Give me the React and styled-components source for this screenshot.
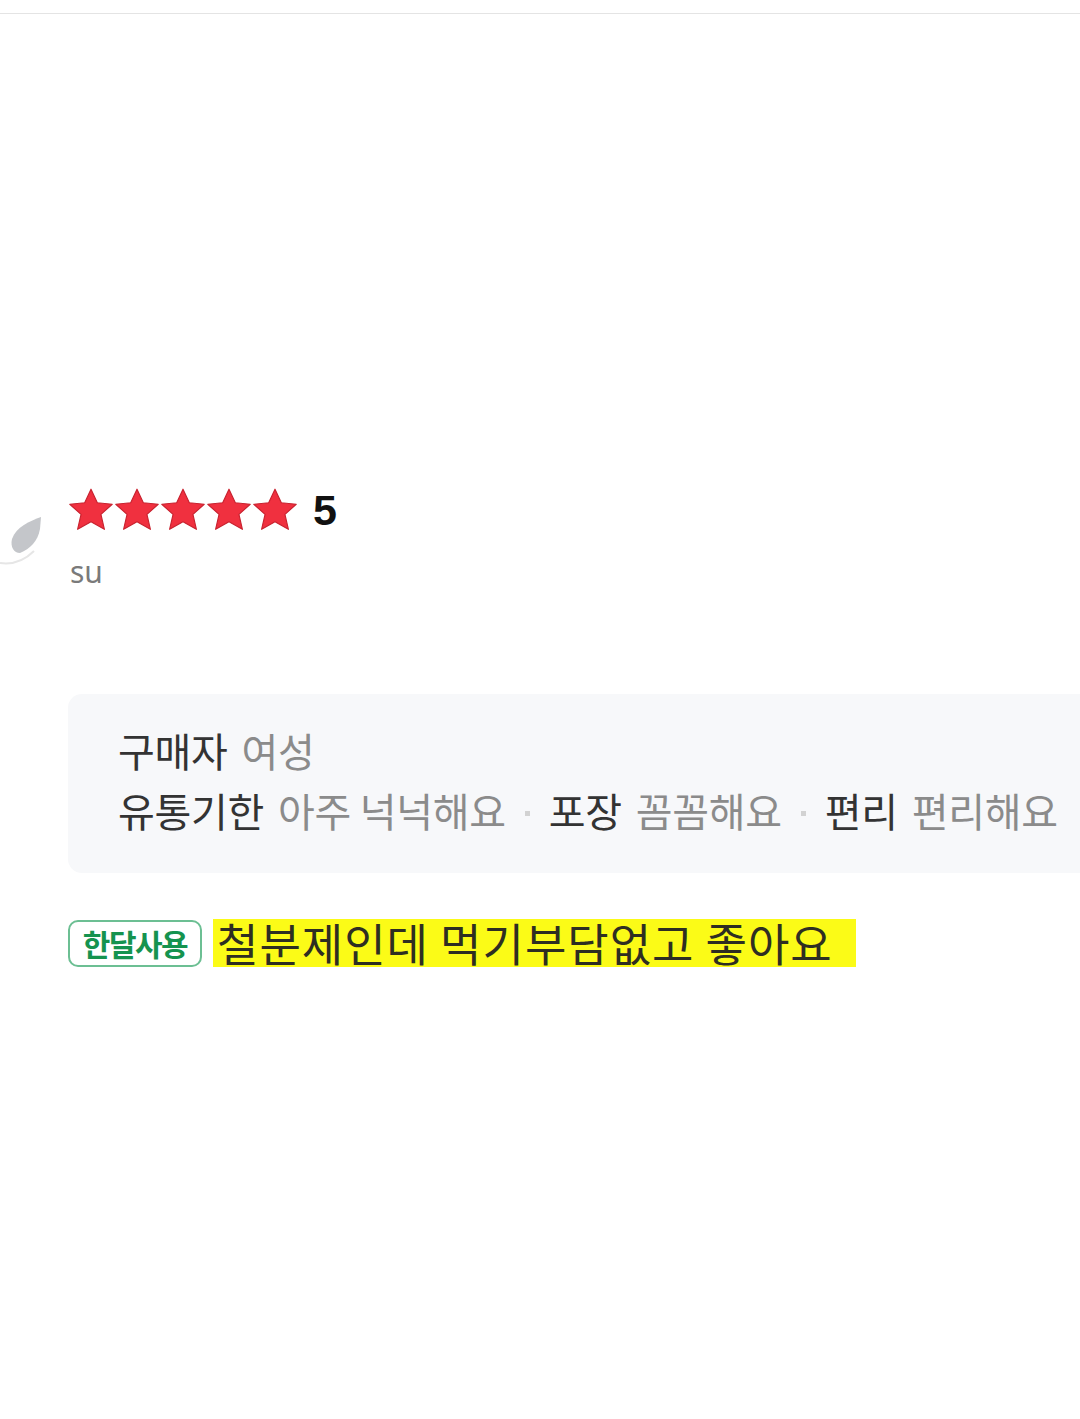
import React from 'react';
import styled, { createGlobalStyle } from 'styled-components';

const GlobalStyle = createGlobalStyle`
  html, body {
    margin: 0;
    padding: 0;
    background: #fff;
  }
  body {
    font-family: "Noto Sans CJK KR", "Noto Sans", sans-serif;
    overflow-x: hidden;
  }
`;

const Page = styled.div`
  width: 1080px;
  height: 1419px;
  overflow: hidden;
  padding-top: 13px;
  box-sizing: border-box;
`;

const TopRule = styled.div`
  height: 1px;
  background: #e4e4e4;
`;

const Review = styled.section`
  padding-top: 461px;
  padding-left: 68px;
`;

const Header = styled.div`
  display: flex;
  align-items: flex-start;
  margin-left: -68px;
`;

const Avatar = styled.svg`
  flex: none;
  width: 44px;
  height: 60px;
  margin-top: 40px;
  margin-right: 24px;
`;

const Meta = styled.div`
  display: flex;
  flex-direction: column;
`;

const RatingRow = styled.div`
  display: flex;
  align-items: center;
  height: 70px;
`;

const Stars = styled.div`
  display: flex;
`;

const Score = styled.span`
  margin-left: 15px;
  font-family: "Liberation Sans", Arial, sans-serif;
  font-weight: 700;
  font-size: 43px;
  color: #111;
  line-height: 1;
`;

const UserName = styled.span`
  display: block;
  width: 36px;
  overflow: hidden;
  white-space: nowrap;
  font-family: "Noto Sans", sans-serif;
  font-size: 30px;
  line-height: 40px;
  color: #7a7a7a;
  margin-top: 7px;
  margin-left: 2px;
`;

const InfoBox = styled.div`
  margin-top: 102px;
  width: 1080px;
  background: #f7f8fa;
  border-radius: 14px;
  padding: 26px 0 33px 50px;
  box-sizing: border-box;
`;

const InfoLine = styled.div`
  display: flex;
  align-items: center;
  white-space: nowrap;
  font-size: 40px;
  line-height: 60px;
  letter-spacing: -0.3px;
`;

const Label = styled.span`
  color: #333;
`;

const Value = styled.span`
  color: #8b8b8b;
  margin-left: 14px;
`;

const Dot = styled.span`
  width: 5px;
  height: 5px;
  background: #d2d2d2;
  margin: 6px 19px 0;
`;

const Summary = styled.div`
  display: flex;
  align-items: center;
  gap: 11px;
  margin-top: 46px;
`;

const Badge = styled.span`
  display: inline-flex;
  align-items: center;
  justify-content: center;
  height: 47px;
  width: 134px;
  box-sizing: border-box;
  border: 2px solid #6cbf93;
  border-radius: 10px;
  color: #15934f;
  font-weight: 700;
  font-size: 30px;
  letter-spacing: -1.5px;
  line-height: 1;
`;

const Highlight = styled.span`
  display: inline-block;
  background: #fbfb17;
  color: #2e2e22;
  font-size: 45px;
  line-height: 48px;
  padding: 0 23px 0 4px;
  letter-spacing: 1px;
  white-space: nowrap;
`;

const Star = () => (
  <svg width="46" height="44" viewBox="0 0 24 23">
    <path
      d="M12 .6l3.3 7.1 7.8.8-5.9 5.3 1.8 7.8L12 17.6l-7 4 1.8-7.8L.9 8.5l7.8-.8z"
      fill="#f0303f"
      stroke="#c8222f"
      strokeWidth="0.6"
      strokeLinejoin="round"
    />
  </svg>
);

const infoRows = [
  [{ label: '구매자', value: '여성' }],
  [
    { label: '유통기한', value: '아주 넉넉해요' },
    { label: '포장', value: '꼼꼼해요' },
    { label: '편리', value: '편리해요' },
  ],
];

const App = () => {
  return (
    <>
      <GlobalStyle />
      <Page>
        <TopRule />
        <Review>
          <Header>
            <Avatar viewBox="0 0 44 60">
              <path d="M0 48 C14 50 26 44 34 36" fill="none" stroke="#e6e6e6" strokeWidth="2" />
              <path d="M41 2 C30 6 16 12 12 24 C10 32 14 38 20 38 C30 34 38 26 40 14 Z" fill="#c4c6ca" />
            </Avatar>
            <Meta>
              <RatingRow>
                <Stars>
                  {[0, 1, 2, 3, 4].map((i) => (
                    <Star key={i} />
                  ))}
                </Stars>
                <Score>5</Score>
              </RatingRow>
              <UserName>su</UserName>
            </Meta>
          </Header>

          <InfoBox>
            {infoRows.map((row, r) => (
              <InfoLine key={r}>
                {row.map((item, i) => (
                  <React.Fragment key={item.label}>
                    {i > 0 && <Dot />}
                    <Label>{item.label}</Label>
                    <Value>{item.value}</Value>
                  </React.Fragment>
                ))}
              </InfoLine>
            ))}
          </InfoBox>

          <Summary>
            <Badge>한달사용</Badge>
            <Highlight>철분제인데 먹기부담없고 좋아요</Highlight>
          </Summary>
        </Review>
      </Page>
    </>
  );
};

export default App;
